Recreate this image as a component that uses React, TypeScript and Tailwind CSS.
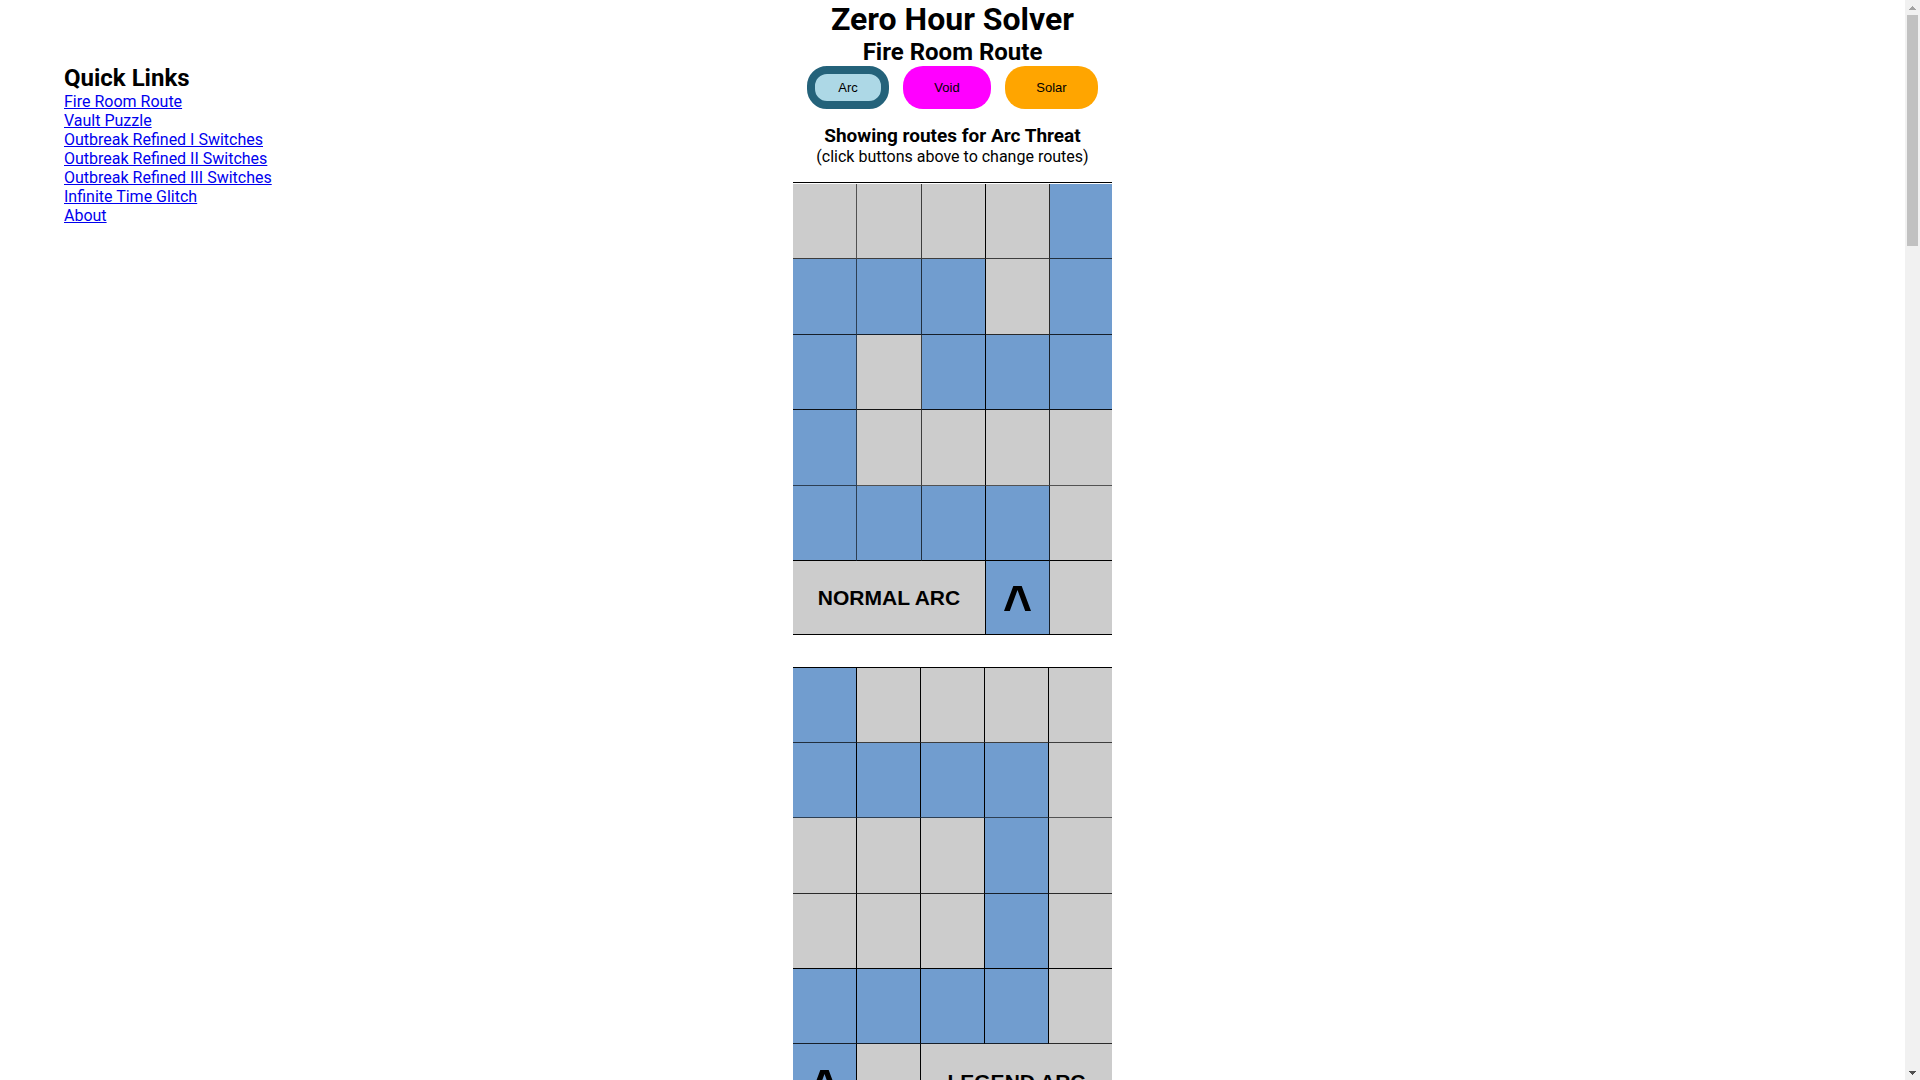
import { useState } from "react";

type Cell = { on?: boolean; span?: boolean; label?: string; arrow?: boolean };

interface RouteMapProps {
  cells: Cell[];
  threat: string;
  grid: string;
  colLines: string[];
  rowLines: string[];
}

const quickLinks = [
  { href: "#fire", text: "Fire Room Route" },
  { href: "#vault", text: "Vault Puzzle" },
  { href: "#outbreak1", text: "Outbreak Refined I Switches" },
  { href: "#outbreak2", text: "Outbreak Refined II Switches" },
  { href: "#outbreak3", text: "Outbreak Refined III Switches" },
  { href: "#glitch", text: "Infinite Time Glitch" },
  { href: "#about", text: "About" },
];

const threats = [
  { name: "Arc", color: "w-[82px] bg-[#add8e6]", active: "border-8 border-[#24627a]" },
  { name: "Void", color: "w-[88px] bg-[#ff00ff]", active: "border-8 border-[#7a007a]" },
  { name: "Solar", color: "w-[93px] bg-[#ffa500]", active: "border-8 border-[#a85f00]" },
];

// "#" is a safe tile, "." is a fire tile
const parseRow = (row: string): Cell[] => row.split("").map((c) => ({ on: c === "#" }));

const normalRoute: Cell[] = [
  ...parseRow("....#"),
  ...parseRow("###.#"),
  ...parseRow("#.###"),
  ...parseRow("#...."),
  ...parseRow("####."),
  { span: true, label: "NORMAL" },
  { on: true, arrow: true },
  {},
];

const legendRoute: Cell[] = [
  ...parseRow("#...."),
  ...parseRow("####."),
  ...parseRow("...#."),
  ...parseRow("...#."),
  ...parseRow("####."),
  { on: true, arrow: true },
  {},
  { span: true, label: "LEGEND" },
];

function RouteMap({ cells, threat, grid, colLines, rowLines }: RouteMapProps) {
  let pos = 0;

  return (
    <div className={`grid w-[319px] border-y border-black ${grid}`}>
      {cells.map((cell, i) => {
        pos += cell.span ? 3 : 1;
        const row = Math.floor((pos - 1) / 5);
        const col = (pos - 1) % 5;
        return (
          <div
            key={i}
            className={`flex items-center justify-center ${
              cell.on ? "bg-[#719dcf]" : "bg-[#cccccc]"
            } ${cell.span ? "col-span-3" : ""} ${col < 4 ? `border-r ${colLines[col]}` : ""} ${
              row < 5 ? `border-b ${rowLines[row]}` : ""
            }`}
          >
            {cell.label && (
              <span className="font-['Liberation_Sans',sans-serif] text-[21px] font-bold">
                {cell.label} {threat.toUpperCase()}
              </span>
            )}
            {cell.arrow && (
              <svg viewBox="0 0 27 26" className="h-[26px] w-[27px]" aria-label="Entrance">
                <path d="M0 26 L9.3 1 H17.7 L27 26 H21.2 L13.5 5 L5.8 26 Z" />
              </svg>
            )}
          </div>
        );
      })}
    </div>
  );
}

function ScrollTrack() {
  return (
    <div className="flex w-[15px] shrink-0 flex-col items-center bg-[#f1f1f1]" aria-hidden="true">
      <div className="flex h-[15px] items-center">
        <svg viewBox="0 0 7 4" className="h-1 w-[7px]" fill="#a3a3a3" shapeRendering="crispEdges">
          <path d="M3 0h1v1h1v1h1v1h1v1H0V3h1V2h1V1h1z" />
        </svg>
      </div>
      <div className="h-[231px] w-[11px] bg-[#c1c1c1]" />
      <div className="mt-auto flex h-[15px] items-center">
        <svg viewBox="0 0 7 4" className="h-1 w-[7px]" fill="#505050" shapeRendering="crispEdges">
          <path d="M0 0h7v1H6v1H5v1H4v1H3V3H2V2H1V1H0z" />
        </svg>
      </div>
    </div>
  );
}

export default function App() {
  const [threat, setThreat] = useState("Arc");

  return (
    <div className="flex h-screen overflow-hidden bg-white font-[Roboto,sans-serif] text-base leading-[19px] text-black">
      <div className="grid flex-1 grid-cols-[1fr_auto_1fr] items-start">
        {/* Quick links */}
        <nav className="pt-16 pl-16">
          <h2 className="text-2xl leading-7 font-bold">Quick Links</h2>
          <ul>
            {quickLinks.map((link) => (
              <li key={link.href}>
                <a href={link.href} className="text-[#0000ee] underline">
                  {link.text}
                </a>
              </li>
            ))}
          </ul>
        </nav>

        {/* Fire room */}
        <main className="flex flex-col items-center">
          <h1 className="text-[32px] leading-[38px] font-bold">Zero Hour Solver</h1>
          <h2 id="fire" className="text-2xl leading-7 font-bold">
            Fire Room Route
          </h2>
          <div className="flex gap-[14px]">
            {threats.map((t) => (
              <button
                key={t.name}
                onClick={() => setThreat(t.name)}
                className={`h-[43px] cursor-pointer rounded-[20px] font-['Liberation_Sans',sans-serif] text-[13px] ${
                  t.color
                } ${threat === t.name ? t.active : ""}`}
              >
                {t.name}
              </button>
            ))}
          </div>
          <h3 className="mt-4 text-[19px] leading-[22px] font-bold">
            Showing routes for {threat} Threat
          </h3>
          <p>(click buttons above to change routes)</p>
          <div className="mt-4 flex flex-col gap-8">
            <RouteMap
              cells={normalRoute}
              threat={threat}
              grid="pt-px grid-cols-[64px_65px_64px_64px_62px] grid-rows-[75px_76px_75px_76px_75px_73px]"
              colLines={["border-r-black/60", "border-r-black/70", "border-r-black", "border-r-black/80"]}
              rowLines={[
                "border-b-black/70",
                "border-b-black/80",
                "border-b-black/90",
                "border-b-black/60",
                "border-b-black",
              ]}
            />
            <RouteMap
              cells={legendRoute}
              threat={threat}
              grid="grid-cols-[64px_64px_64px_64px_63px] grid-rows-[75px_75px_76px_75px_75px_75px]"
              colLines={["border-r-black", "border-r-black", "border-r-black", "border-r-black"]}
              rowLines={[
                "border-b-black/70",
                "border-b-black/60",
                "border-b-black/80",
                "border-b-black",
                "border-b-black/80",
              ]}
            />
          </div>
        </main>
      </div>
      <ScrollTrack />
    </div>
  );
}
